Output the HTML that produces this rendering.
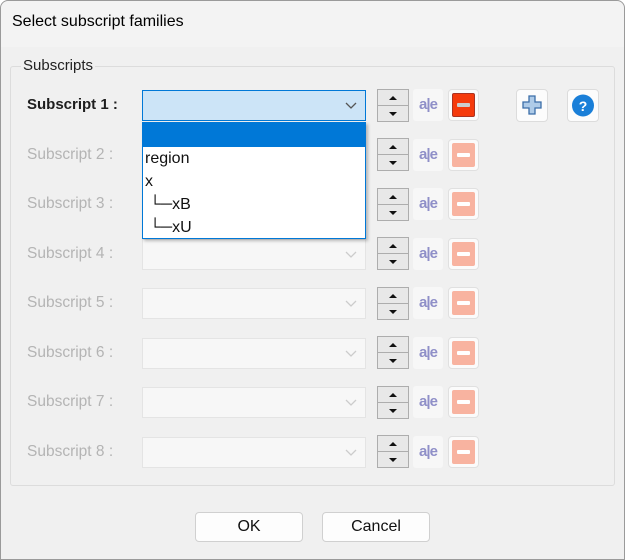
<!DOCTYPE html>
<html><head><meta charset="utf-8"><style>
*{box-sizing:border-box;margin:0;padding:0}
body{width:625px;height:560px;background:#fff;font-family:"Liberation Sans",sans-serif;position:relative;overflow:hidden}
.win{position:absolute;left:0;top:0;width:625px;height:560px;box-shadow:inset 0 0 0 1px #9a9a9a;border-radius:8px 8px 0 0;background:#f0f0f0;overflow:hidden}
.title{position:absolute;left:1px;top:1px;width:623px;height:46px;background:#f3f3f3;border-radius:8px 8px 0 0}
.title span{position:absolute;left:11px;top:12px;font-size:16px;color:#000}
.grp{position:absolute;left:10px;top:66px;width:605px;height:420px;border:1px solid #dcdcdc;border-radius:3px}
.glab{position:absolute;left:21px;top:57px;background:#f0f0f0;padding:0 2px;font-size:15px;color:#222}
.lab{position:absolute;left:27px;font-size:15.5px;color:#b4b4b4}
.lab.on{color:#1e1e1e;font-weight:bold;font-size:15px}
.cb{position:absolute;left:142px;width:224px;height:31px;background:#f7f7f7;border:1px solid #e4e4e4}
.cb svg{position:absolute;right:8px;top:11px}
.cb.on{background:#cce4f7;border:1px solid #0078d7}
.sp{position:absolute;left:377px;width:32px;height:33px;border:1px solid #adadad;background:#e8e8e8}
.sp:after{content:"";position:absolute;left:0;right:0;top:15px;border-top:1px solid #adadad}
.sp i{position:absolute;left:11px;width:0;height:0;border-left:4px solid transparent;border-right:4px solid transparent}
.sp .u{top:6px;border-bottom:4px solid #111}.sp .d{top:22px;border-top:4px solid #111}
.ae{position:absolute;left:413px;width:30px;height:32px;background:#f7f7f7;border-radius:3px;font-size:15px;color:#8f8fc8;font-weight:bold;text-align:center;line-height:32px;letter-spacing:-1px}
.mb{position:absolute;left:448px;width:31px;height:32px;background:#fbfbfb;border:1px solid #e0e0e0;border-radius:4px}
.mb b{position:absolute;left:3px;top:3px;width:23px;height:24px;background:#f8b3a0;border-radius:2px}
.mb b:after{content:"";position:absolute;left:5px;top:10px;width:13px;height:4px;background:#fff;border-radius:1px}
.mb.on b{background:#f53a0c;border:1px solid #a32}
.mb.on b:after{left:4px;top:9px;background:#ccc}
.list{position:absolute;left:142px;top:122px;width:224px;height:117px;background:#fff;border:1px solid #0078d7;box-shadow:2px 2px 3px rgba(0,0,0,.25);font-size:16px;color:#111}
.list .h{height:24px;background:#0078d7}
.list div{height:23px;line-height:23px;padding-left:2px}
.btn{position:absolute;top:512px;height:30px;background:#fdfdfd;border:1px solid #d0d0d0;border-radius:4px;font-size:16px;text-align:center;line-height:28px;color:#111}
.ib{position:absolute;top:89px;width:32px;height:33px;background:#fcfcfc;border:1px solid #dcdcdc;border-radius:4px}
</style></head><body>
<div class="win">
<div class="title"><span>Select subscript families</span></div>
<div class="grp"></div>
<div class="glab">Subscripts</div>

<div class="lab on" style="top:96px">Subscript 1 :</div>
<div class="cb on" style="top:90px"><svg width="12" height="8"><path d="M1 1 L6 6 L11 1" fill="none" stroke="#555" stroke-width="1.3"/></svg></div>
<div class="sp" style="top:89px"><i class="u"></i><i class="d"></i></div>
<div class="ae" style="top:89px">a|e</div>
<div class="mb on" style="top:89px"><b></b></div>

<div class="ib" style="left:516px"><svg width="30" height="31" viewBox="0 0 30 31"><path d="M12 6h6v6h6v6h-6v6h-6v-6h-6v-6h6z" fill="#aecbe8" stroke="#3b6ea8" stroke-width="1.3"/></svg></div>
<div class="ib" style="left:567px"><svg width="30" height="31"><circle cx="15" cy="15.5" r="11" fill="#1a7fd8"/><text x="15" y="21" font-family="Liberation Sans" font-weight="bold" font-size="14" fill="#fff" text-anchor="middle">?</text></svg></div>

<div class="lab" style="top:146px">Subscript 2 :</div>
<div class="sp" style="top:138px"><i class="u"></i><i class="d"></i></div><div class="ae" style="top:139px">a|e</div><div class="mb" style="top:139px"><b></b></div>

<div class="lab" style="top:195px">Subscript 3 :</div>
<div class="sp" style="top:188px"><i class="u"></i><i class="d"></i></div><div class="ae" style="top:188px">a|e</div><div class="mb" style="top:188px"><b></b></div>

<div class="lab" style="top:245px">Subscript 4 :</div>
<div class="cb" style="top:239px"><svg width="12" height="8"><path d="M1 1 L6 6 L11 1" fill="none" stroke="#ccc" stroke-width="1.3"/></svg></div>
<div class="sp" style="top:237px"><i class="u"></i><i class="d"></i></div><div class="ae" style="top:238px">a|e</div><div class="mb" style="top:238px"><b></b></div>

<div class="lab" style="top:294px">Subscript 5 :</div>
<div class="cb" style="top:288px"><svg width="12" height="8"><path d="M1 1 L6 6 L11 1" fill="none" stroke="#ccc" stroke-width="1.3"/></svg></div>
<div class="sp" style="top:287px"><i class="u"></i><i class="d"></i></div><div class="ae" style="top:287px">a|e</div><div class="mb" style="top:287px"><b></b></div>

<div class="lab" style="top:344px">Subscript 6 :</div>
<div class="cb" style="top:338px"><svg width="12" height="8"><path d="M1 1 L6 6 L11 1" fill="none" stroke="#ccc" stroke-width="1.3"/></svg></div>
<div class="sp" style="top:336px"><i class="u"></i><i class="d"></i></div><div class="ae" style="top:337px">a|e</div><div class="mb" style="top:337px"><b></b></div>

<div class="lab" style="top:393px">Subscript 7 :</div>
<div class="cb" style="top:387px"><svg width="12" height="8"><path d="M1 1 L6 6 L11 1" fill="none" stroke="#ccc" stroke-width="1.3"/></svg></div>
<div class="sp" style="top:386px"><i class="u"></i><i class="d"></i></div><div class="ae" style="top:386px">a|e</div><div class="mb" style="top:386px"><b></b></div>

<div class="lab" style="top:443px">Subscript 8 :</div>
<div class="cb" style="top:437px"><svg width="12" height="8"><path d="M1 1 L6 6 L11 1" fill="none" stroke="#ccc" stroke-width="1.3"/></svg></div>
<div class="sp" style="top:435px"><i class="u"></i><i class="d"></i></div><div class="ae" style="top:436px">a|e</div><div class="mb" style="top:436px"><b></b></div>

<div class="list"><div class="h"></div><div>region</div><div>x</div><div>&nbsp;└─xB</div><div>&nbsp;└─xU</div></div>

<div class="btn" style="left:195px;width:108px">OK</div>
<div class="btn" style="left:322px;width:108px">Cancel</div>
</div>
</body></html>
